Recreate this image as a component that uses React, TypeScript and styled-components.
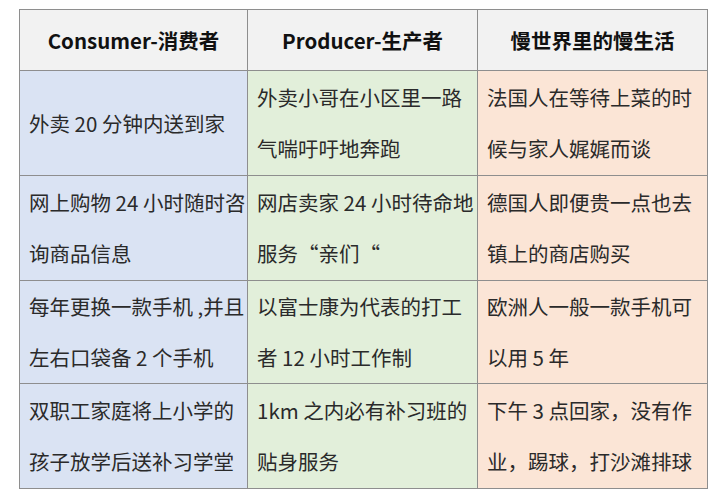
import styled, { createGlobalStyle } from "styled-components";

const GlobalStyle = createGlobalStyle`
  html, body {
    margin: 0;
    padding: 0;
    background: #ffffff;
  }
`;

const Page = styled.div`
  width: 723px;
  height: 500px;
  padding: 9px 0 0 19px;
  box-sizing: border-box;
  font-family: "Noto Sans CJK SC", "Noto Sans", sans-serif;
`;

const Table = styled.table`
  border-collapse: collapse;
  table-layout: fixed;
  width: 688px;
`;

const HeadCell = styled.th`
  height: 60px;
  padding: 0;
  border: 1px solid #8e8e8e;
  background: #f2f2f2;
  color: #111;
  font-size: 20.5px;
  font-weight: 700;
  text-align: center;
  vertical-align: middle;
`;

const Row = styled.tr<{ $h: number }>`
  height: ${(p) => p.$h}px;
`;

const tints = ["#dae3f3", "#e2efda", "#fbe5d6"];

const Cell = styled.td<{ $col: number }>`
  padding: 0 0 0 9px;
  border: 1px solid #8e8e8e;
  background: ${(p) => tints[p.$col]};
  color: #2a2a2a;
  font-size: 20.5px;
  line-height: 51px;
  vertical-align: middle;
  white-space: nowrap;
`;

const Line = styled.div``;

const headers = ["Consumer-消费者", "Producer-生产者", "慢世界里的慢生活"];

const rows: { h: number; cells: string[][] }[] = [
  {
    h: 105,
    cells: [
      ["外卖 20 分钟内送到家"],
      ["外卖小哥在小区里一路", "气喘吁吁地奔跑"],
      ["法国人在等待上菜的时", "候与家人娓娓而谈"],
    ],
  },
  {
    h: 105,
    cells: [
      ["网上购物 24 小时随时咨", "询商品信息"],
      ["网店卖家 24 小时待命地", "服务“亲们“"],
      ["德国人即便贵一点也去", "镇上的商店购买"],
    ],
  },
  {
    h: 102,
    cells: [
      ["每年更换一款手机 ,并且", "左右口袋备 2 个手机"],
      ["以富士康为代表的打工", "者 12 小时工作制"],
      ["欧洲人一般一款手机可", "以用 5 年"],
    ],
  },
  {
    h: 105,
    cells: [
      ["双职工家庭将上小学的", "孩子放学后送补习学堂"],
      ["1km 之内必有补习班的", "贴身服务"],
      ["下午 3 点回家，没有作", "业，踢球，打沙滩排球"],
    ],
  },
];

export default function App() {
  return (
    <>
      <GlobalStyle />
      <Page>
        <Table>
          <colgroup>
            <col style={{ width: 228 }} />
            <col style={{ width: 230 }} />
            <col style={{ width: 230 }} />
          </colgroup>
          <thead>
            <tr>
              {headers.map((h) => (
                <HeadCell key={h}>{h}</HeadCell>
              ))}
            </tr>
          </thead>
          <tbody>
            {rows.map((r, i) => (
              <Row key={i} $h={r.h}>
                {r.cells.map((lines, c) => (
                  <Cell key={c} $col={c}>
                    {lines.map((l) => (
                      <Line key={l}>{l}</Line>
                    ))}
                  </Cell>
                ))}
              </Row>
            ))}
          </tbody>
        </Table>
      </Page>
    </>
  );
}
